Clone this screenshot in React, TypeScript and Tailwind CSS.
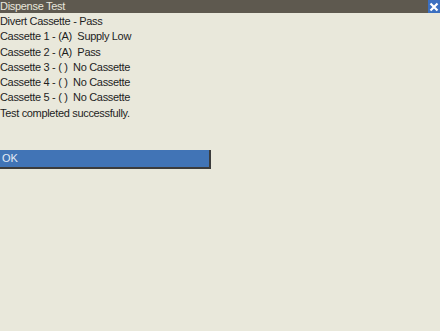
export default function App() {
  const lines = [
    'Divert Cassette - Pass',
    'Cassette 1 - (A)  Supply Low',
    'Cassette 2 - (A)  Pass',
    'Cassette 3 - ( )  No Cassette',
    'Cassette 4 - ( )  No Cassette',
    'Cassette 5 - ( )  No Cassette',
    'Test completed successfully.',
  ]
  return (
    <div className="w-[440px] h-[331px] bg-[#e9e8db] flex flex-col font-['Liberation_Sans',Arial,sans-serif] text-[11px]">
      <div className="h-[13px] bg-[#5e594f] flex items-center justify-between">
        <span className="text-[#e8e6dc] leading-[13px] tracking-[-0.3px]">Dispense Test</span>
        <div className="w-[12px] h-[13px] bg-[#3b6fc0] flex items-center justify-center">
          <svg width="10" height="10" viewBox="0 0 10 10">
            <path d="M1.5 1.5 L8.5 8.5 M8.5 1.5 L1.5 8.5" stroke="#fff" strokeWidth="2.2" />
          </svg>
        </div>
      </div>
      <div className="flex flex-col pt-[1px] text-[#1e1e1e] tracking-[-0.32px]">
        {lines.map((l) => (
          <div key={l} className="h-[15.3px] leading-[15px] whitespace-pre">
            {l}
          </div>
        ))}
      </div>
      <div className="mt-[29px] w-[211px] h-[19px] bg-[#4174b6] border-r-2 border-b-2 border-[#3c3c3c] flex items-center pl-[2px] text-[#e4ebf5] text-[11px]">
        OK
      </div>
    </div>
  )
}
